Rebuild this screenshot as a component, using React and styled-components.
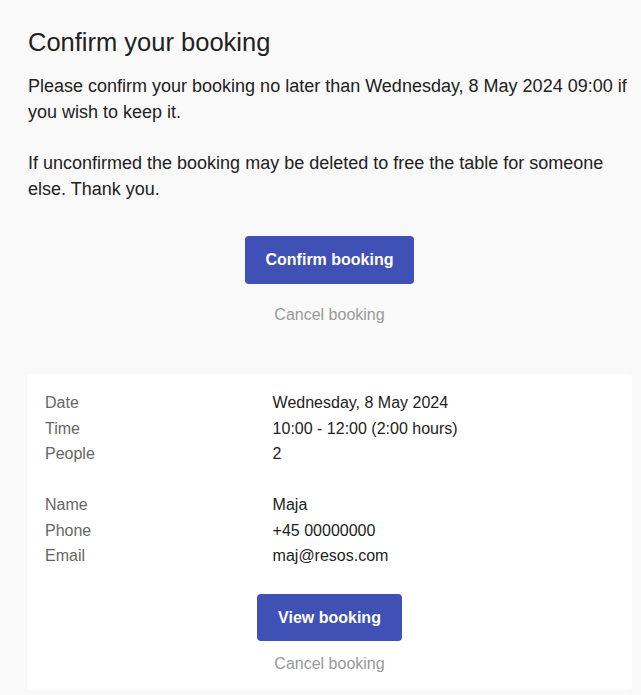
import React from "react";
import styled, { createGlobalStyle } from "styled-components";

const GlobalStyle = createGlobalStyle`
  html, body {
    margin: 0;
    padding: 0;
    background: #F9F9F9;
  }
  body {
    font-family: "Liberation Sans", Arial, sans-serif;
    color: #222222;
  }
`;

const Page = styled.div`
  width: 605px;
  margin-left: 27px;
  padding-top: 28px;
  padding-bottom: 5px;
`;

const Title = styled.h1`
  margin: 0 0 0 1px;
  font-size: 25.5px;
  line-height: 29px;
  font-weight: normal;
  color: #222222;
`;

const Message = styled.p`
  margin: 17px 0 0 1px;
  font-size: 18px;
  line-height: 25.7px;
  color: #222222;
`;

const Actions = styled.div`
  display: flex;
  flex-direction: column;
  align-items: center;
  margin-top: ${props => props.top || 0}px;
`;

const Button = styled.a`
  display: inline-block;
  background: #3F51B5;
  color: #FFFFFF;
  font-weight: bold;
  font-size: 16px;
  line-height: ${props => props.tall ? 20 : 19}px;
  padding: 14px 21px;
  border-radius: 4px;
  text-decoration: none;
  cursor: pointer;
`;

const CancelLink = styled.a`
  display: block;
  margin-top: ${props => props.gap}px;
  font-size: 16px;
  line-height: 25.5px;
  color: #999999;
  text-decoration: none;
  cursor: pointer;
`;

const Card = styled.div`
  margin-top: 47px;
  background: #FFFFFF;
  border-radius: 4px;
  padding: 16px 18px 14px;
`;

const Details = styled.div`
  display: grid;
  grid-template-columns: 40% 60%;
  font-size: 16px;
  line-height: 25.5px;
`;

const Label = styled.div`
  color: #666666;
`;

const Value = styled.div`
  color: #222222;
`;

const Spacer = styled.div`
  grid-column: 1 / span 2;
  height: 25.5px;
`;

const rows = [
  ["Date", "Wednesday, 8 May 2024"],
  ["Time", "10:00 - 12:00 (2:00 hours)"],
  ["People", "2"],
  null,
  ["Name", "Maja"],
  ["Phone", "+45 00000000"],
  ["Email", "maj@resos.com"]
];

export default function App() {
  return (
    <>
      <GlobalStyle />
      <Page>
        <Title>Confirm your booking</Title>
        <Message>
          Please confirm your booking no later than Wednesday, 8 May 2024 09:00 if you wish to keep it.
          <br />
          <br />
          If unconfirmed the booking may be deleted to free the table for someone else. Thank you.
        </Message>
        <Actions top={33}>
          <Button tall>Confirm booking</Button>
          <CancelLink gap={18}>Cancel booking</CancelLink>
        </Actions>
        <Card>
          <Details>
            {rows.map((row, i) =>
              row ? (
                <React.Fragment key={i}>
                  <Label>{row[0]}</Label>
                  <Value>{row[1]}</Value>
                </React.Fragment>
              ) : (
                <Spacer key={i} />
              )
            )}
          </Details>
          <Actions top={25}>
            <Button>View booking</Button>
            <CancelLink gap={10}>Cancel booking</CancelLink>
          </Actions>
        </Card>
      </Page>
    </>
  );
}
